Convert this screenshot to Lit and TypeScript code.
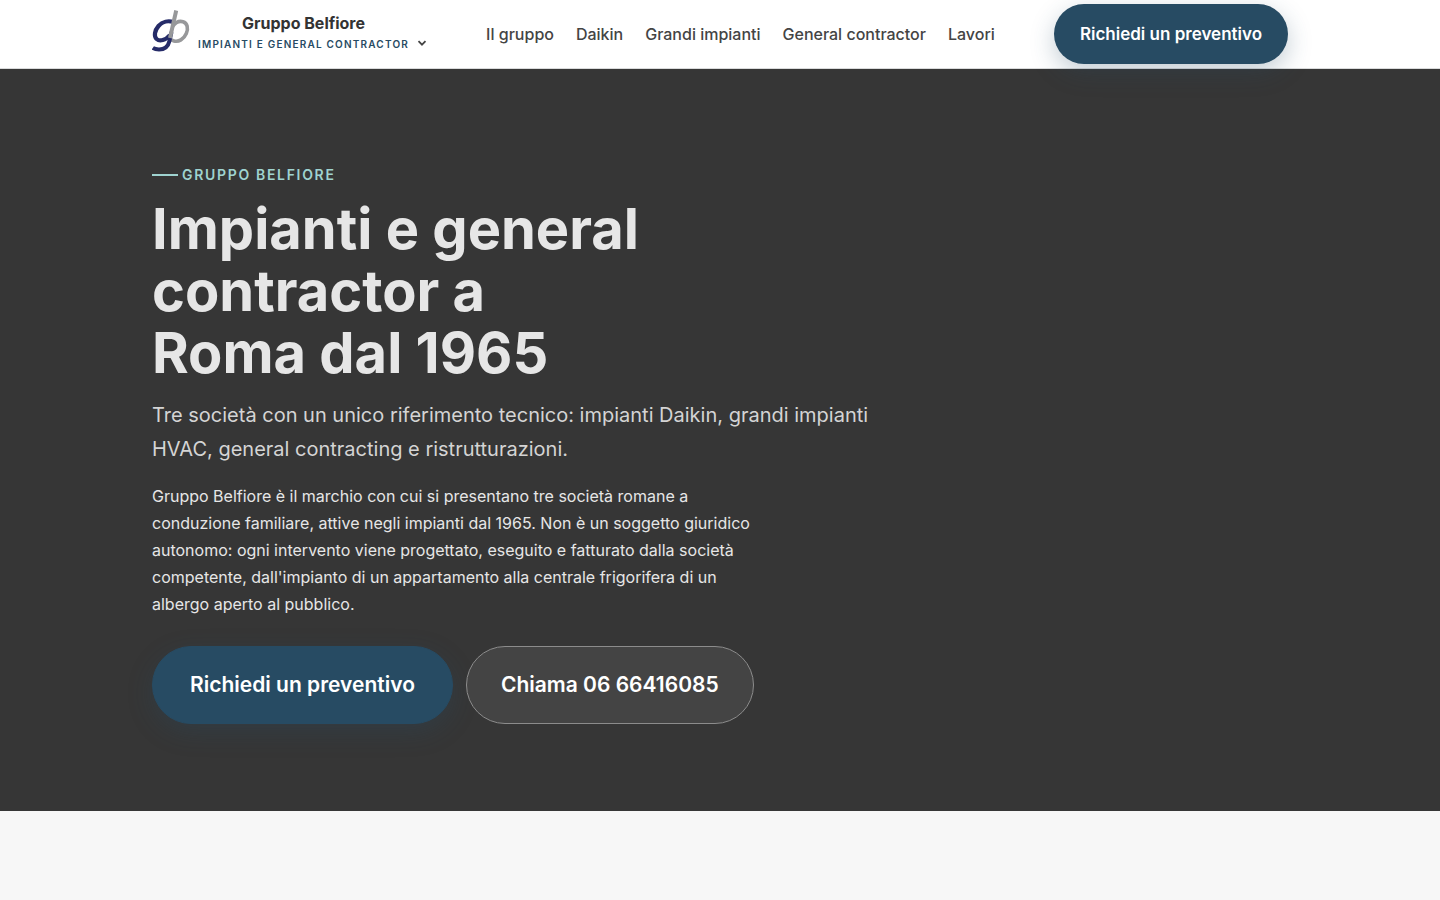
import { LitElement, html, css } from "lit";
import { customElement } from "lit/decorators.js";

const NAV = ["Il gruppo", "Daikin", "Grandi impianti", "General contractor", "Lavori"];

@customElement("site-header")
class SiteHeader extends LitElement {
  static styles = css`
    :host { display: block; position: relative; z-index: 1; background: #fff; border-bottom: 1px solid #d9dadb; }
    .bar {
      box-sizing: border-box; max-width: 1184px; height: 68px; margin: 0 auto; padding: 0 24px;
      display: flex; align-items: center; justify-content: space-between;
    }
    .brand {
      display: flex; align-items: center; gap: 8px; padding: 0; border: 0; background: none;
      font-family: inherit; color: #333; cursor: pointer;
    }
    .logo { width: 38px; height: 42px; display: block; margin-bottom: 6px; }
    .names { display: flex; flex-direction: column; align-items: center; margin-bottom: 2px; }
    .name { font-size: 16px; line-height: 22px; font-weight: 700; }
    .tag { font-size: 10px; line-height: 20px; font-weight: 600; letter-spacing: 0.12em; color: #274b63; text-transform: uppercase; }
    .chev { width: 10px; height: 10px; align-self: flex-end; margin-bottom: 10px; }
    .nav { display: flex; gap: 22px; }
    .link { font-size: 16px; line-height: 24px; font-weight: 500; color: #444; text-decoration: none; white-space: nowrap; }
    .cta {
      padding: 18px 26px; border-radius: 30px; background: #274b63; color: #fff; text-decoration: none;
      font-size: 17px; line-height: 24px; font-weight: 600; white-space: nowrap;
      box-shadow: 0 8px 24px rgba(39, 75, 99, 0.28);
    }
  `;
  render() {
    return html`
      <div class="bar">
        <button class="brand" type="button" aria-haspopup="true">
          <svg class="logo" viewBox="0 0 38 42" fill="none" aria-hidden="true">
            <path d="M20.500 16.500C23.500 12.300 27.500 10.700 31 11.700C35.500 13 36.500 18.500 34.300 23.500C31.800 29.300 26.500 32.300 22 31C20.500 30.600 19 30 18 28.500" stroke="#97989a" stroke-width="3.600" />
            <path d="M21.500 12.200C16.500 10.300 10.500 11.500 6.500 16C2.600 20.500 1.700 26.300 4.600 29C7.600 31.600 13.500 30.500 18 25" stroke="#252b68" stroke-width="4.200" />
            <path d="M19.500 22 17.300 31.500C16 36.800 12 39.500 7 39.500C4.400 39.500 2.200 39 .800 38" stroke="#252b68" stroke-width="4" />
            <path d="M24.200 0.500 18 28" stroke="#97989a" stroke-width="4" />
          </svg>
          <span class="names">
            <span class="name">Gruppo Belfiore</span>
            <span class="tag">Impianti e general contractor</span>
          </span>
          <svg class="chev" viewBox="0 0 10 10" fill="none" stroke="#444" stroke-width="1.800" aria-hidden="true">
            <path d="M1.500 3.200 5 6.700 8.500 3.200" />
          </svg>
        </button>
        <nav class="nav" aria-label="Principale">
          ${NAV.map((label) => html`<a class="link" href="#">${label}</a>`)}
        </nav>
        <a class="cta" href="#preventivo">Richiedi un preventivo</a>
      </div>
    `;
  }
}

@customElement("site-hero")
class SiteHero extends LitElement {
  static styles = css`
    :host { display: block; background: #363636; }
    .wrap { box-sizing: border-box; max-width: 1184px; margin: 0 auto; padding: 94px 24px 87px; }
    .kicker {
      display: flex; align-items: center; gap: 4px; margin: 0 0 12px;
      font-size: 14px; line-height: 23px; font-weight: 600; letter-spacing: 0.12em;
      text-transform: uppercase; color: #9fd3d0;
    }
    .kicker::before { content: ""; width: 26px; height: 2px; background: currentColor; }
    .title { margin: 0 0 14px; font-size: 56px; line-height: 62px; font-weight: 700; color: #e6e6e6; }
    .lead { margin: 0 0 17px; max-width: 760px; font-size: 20px; line-height: 34px; color: #d4d4d4; }
    .body { margin: 0 0 28px; max-width: 620px; font-size: 16px; line-height: 27px; color: #e6e6e6; }
    .actions { display: flex; flex-wrap: wrap; gap: 13px; }
    .btn {
      padding: 22px 37px; border: 1px solid #274b63; border-radius: 39px; background: #274b63; color: #fff;
      font-size: 21px; line-height: 32px; font-weight: 600; text-decoration: none;
      box-shadow: 0 8px 24px rgba(39, 75, 99, 0.28);
    }
    .ghost { padding: 22px 34px; background: #444; border-color: #8c8c8c; box-shadow: none; }
  `;
  render() {
    return html`
      <div class="wrap">
        <p class="kicker">Gruppo Belfiore</p>
        <h1 class="title">Impianti e general<br />contractor a<br />Roma dal 1965</h1>
        <p class="lead">
          Tre società con un unico riferimento tecnico: impianti Daikin, grandi impianti HVAC, general
          contracting e ristrutturazioni.
        </p>
        <p class="body">
          Gruppo Belfiore è il marchio con cui si presentano tre società romane a conduzione familiare,
          attive negli impianti dal 1965. Non è un soggetto giuridico autonomo: ogni intervento viene
          progettato, eseguito e fatturato dalla società competente, dall'impianto di un appartamento
          alla centrale frigorifera di un albergo aperto al pubblico.
        </p>
        <div class="actions">
          <a class="btn" href="#preventivo">Richiedi un preventivo</a>
          <a class="btn ghost" href="tel:0666416085">Chiama 06 66416085</a>
        </div>
      </div>
    `;
  }
}

@customElement("app-root")
class AppRoot extends LitElement {
  static styles = css`
    :host { display: block; min-height: 100vh; background: #f7f7f7; font-family: Inter, "Liberation Sans", sans-serif; }
  `;
  render() {
    return html`<site-header></site-header><main><site-hero></site-hero></main>`;
  }
}
